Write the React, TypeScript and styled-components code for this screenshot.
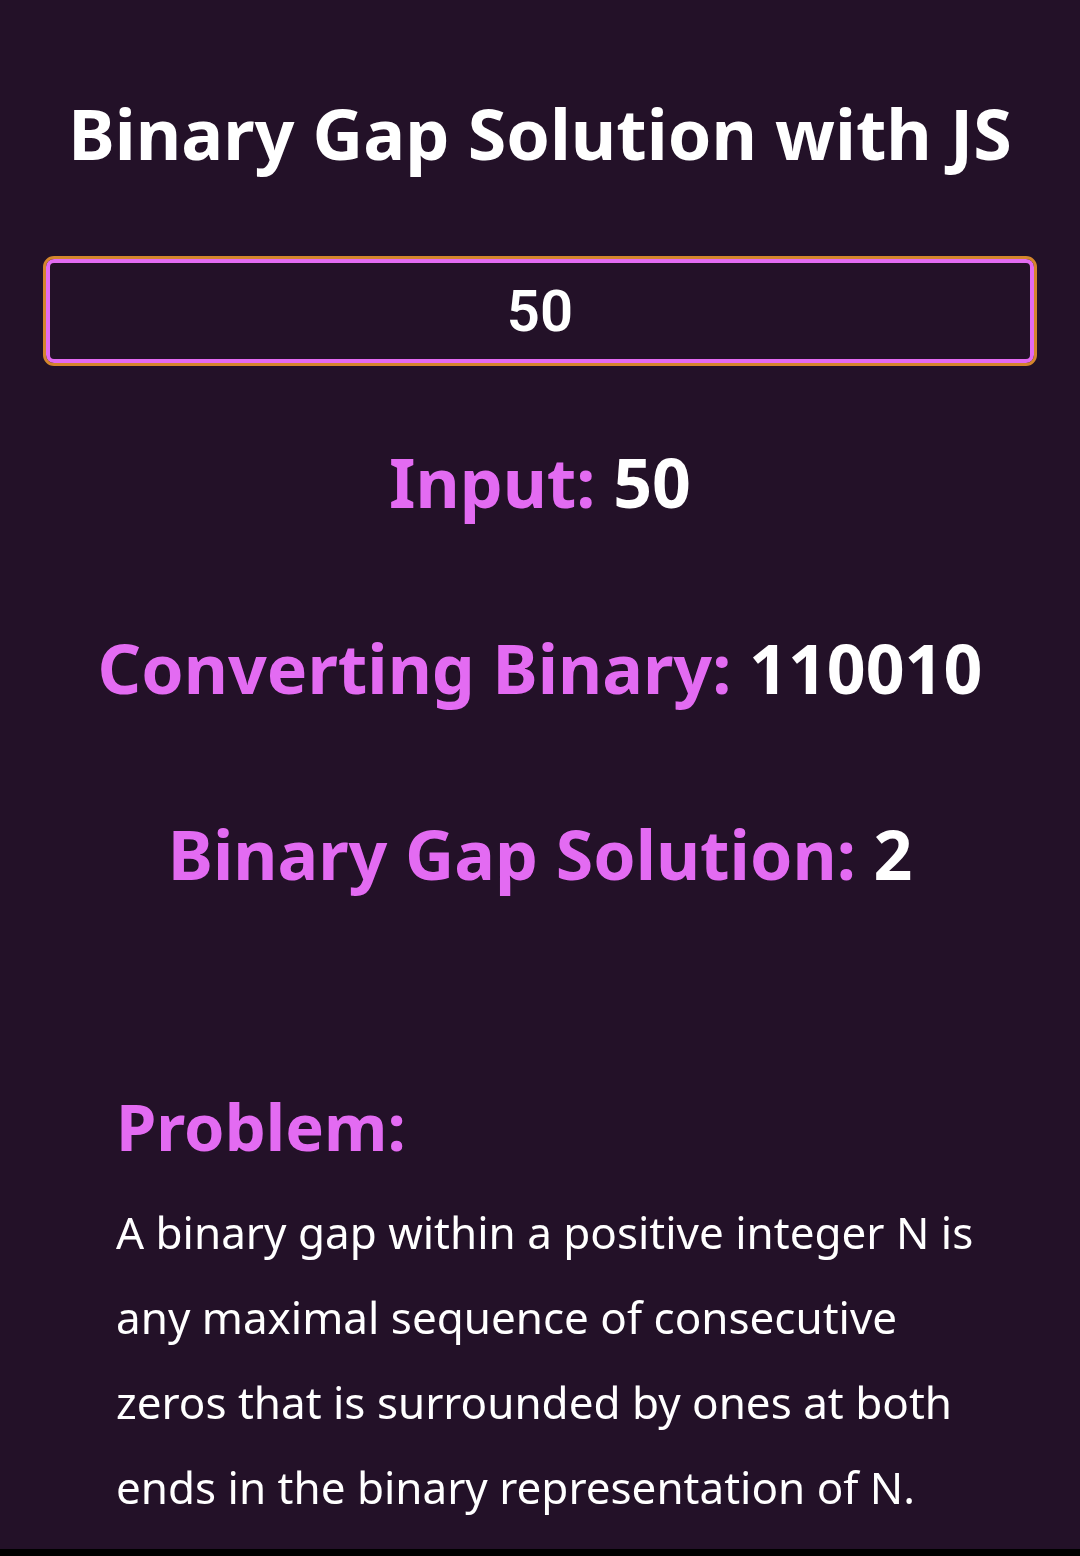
import React, { useState } from "react";
import styled, { createGlobalStyle } from "styled-components";

const GlobalStyle = createGlobalStyle`
  body {
    margin: 0;
    background: #000;
    font-family: "Noto Sans", sans-serif;
  }
`;

const Page = styled.div`
  min-height: 1549px;
  background: #231128;
  display: flex;
  flex-direction: column;
  align-items: center;
  padding-top: 98px;
  box-sizing: border-box;
`;

const Title = styled.h1`
  margin: 0;
  font-size: 70px;
  line-height: 1;
  font-weight: 700;
  color: #fff;
`;

const NumberInput = styled.input`
  margin-top: 91px;
  width: 988px;
  height: 104px;
  box-sizing: border-box;
  background: transparent;
  border: 4px solid #e36bf2;
  border-radius: 8px;
  outline: 3px solid #d4862c;
  outline-offset: 0;
  color: #fff;
  caret-color: #fff;
  text-align: center;
  font-family: Roboto, sans-serif;
  font-weight: 600;
  font-size: 58px;
`;

const ResultLine = styled.div<{ $top: number }>`
  margin-top: ${(p) => p.$top}px;
  font-size: 68px;
  line-height: 1;
  font-weight: 700;
  color: #e36bf2;
`;

const Value = styled.span`
  color: #fff;
`;

const Problem = styled.section`
  align-self: stretch;
  padding: 0 94px 0 116px;
`;

const ProblemTitle = styled.h2`
  margin: 206px 0 0;
  font-size: 65px;
  line-height: 1;
  font-weight: 700;
  color: #e36bf2;
`;

const ProblemText = styled.p`
  margin: 31px 0 0;
  font-size: 44px;
  line-height: 85px;
  font-weight: 400;
  color: #fff;
`;

const binaryGap = (n: number) => {
  const bin = n.toString(2);
  let best = 0;
  let cur = 0;
  let open = false;
  for (const c of bin) {
    if (c === "1") {
      if (open) best = Math.max(best, cur);
      open = true;
      cur = 0;
    } else {
      cur++;
    }
  }
  return best;
};

const App = () => {
  const [value, setValue] = useState("50");
  const n = parseInt(value) || 0;

  return (
    <Page>
      <GlobalStyle />
      <Title>Binary Gap Solution with JS</Title>
      <NumberInput
        type="text"
        value={value}
        autoFocus
        onChange={(e) => setValue(e.target.value)}
      />
      <ResultLine $top={85}>
        Input: <Value>{n}</Value>
      </ResultLine>
      <ResultLine $top={118}>
        Converting Binary: <Value>{n.toString(2)}</Value>
      </ResultLine>
      <ResultLine $top={118}>
        Binary Gap Solution: <Value>{binaryGap(n)}</Value>
      </ResultLine>
      <Problem>
        <ProblemTitle>Problem:</ProblemTitle>
        <ProblemText>
          A binary gap within a positive integer N is any maximal sequence of
          consecutive zeros that is surrounded by ones at both ends in the
          binary representation of N.
        </ProblemText>
      </Problem>
    </Page>
  );
};

export default App;
